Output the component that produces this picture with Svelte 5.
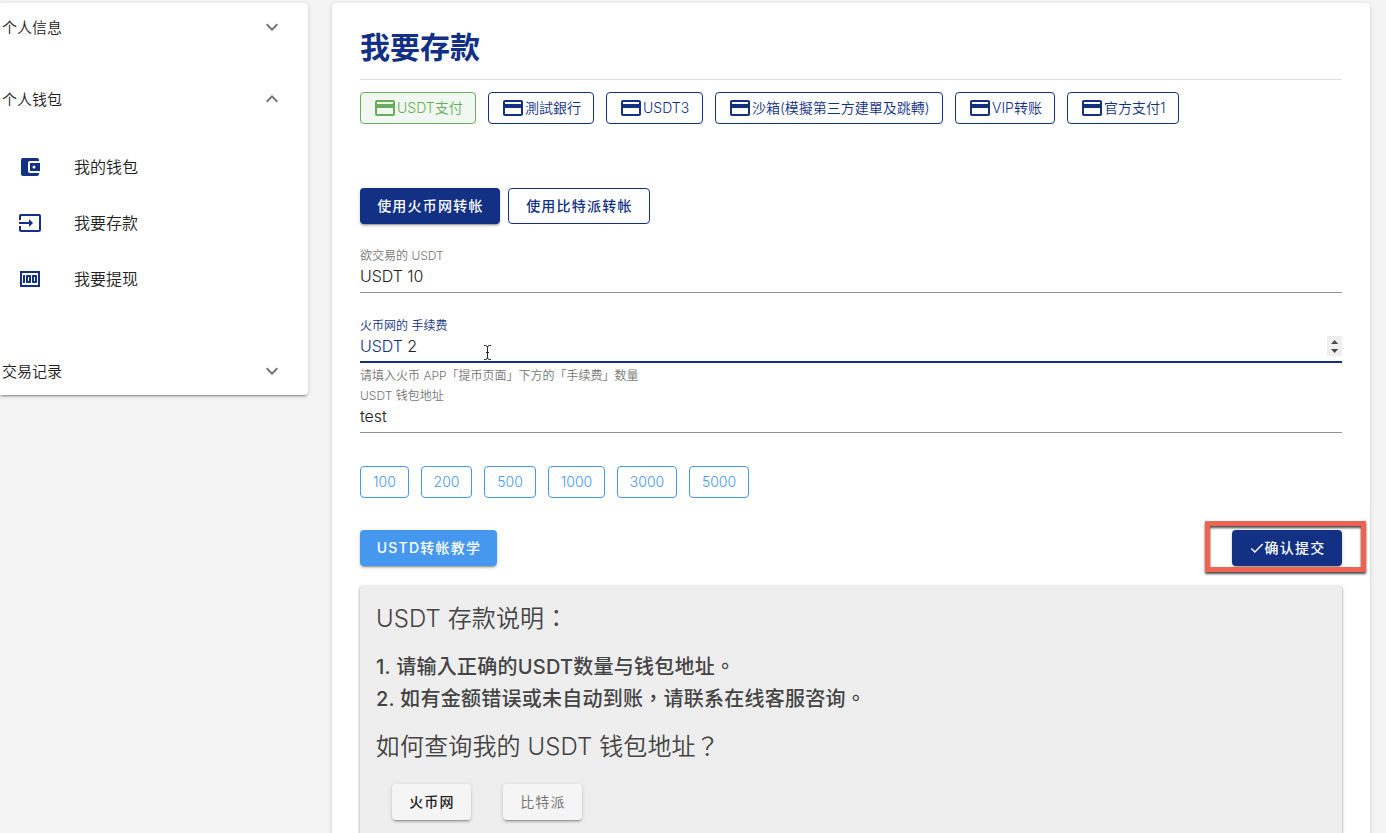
<script>
  const chips = [
    { label: 'USDT支付', width: 116, active: true },
    { label: '測試銀行', width: 106 },
    { label: 'USDT3', width: 97 },
    { label: '沙箱(模擬第三方建單及跳轉)', width: 228 },
    { label: 'VIP转账', width: 100 },
    { label: '官方支付1', width: 112 }
  ];
  const amounts = [
    { value: 100, width: 49 },
    { value: 200, width: 51 },
    { value: 500, width: 52 },
    { value: 1000, width: 57 },
    { value: 3000, width: 60 },
    { value: 5000, width: 60 }
  ];
  const walletItems = [
    {
      label: '我的钱包',
      path: 'M21,18V19A2,2 0 0,1 19,21H5C3.89,21 3,20.1 3,19V5A2,2 0 0,1 5,3H19A2,2 0 0,1 21,5V6H12C10.89,6 10,6.9 10,8V16A2,2 0 0,0 12,18M12,16H22V8H12M16,13.5A1.5,1.5 0 0,1 14.5,12A1.5,1.5 0 0,1 16,10.5A1.5,1.5 0 0,1 17.5,12A1.5,1.5 0 0,1 16,13.5Z'
    },
    {
      label: '我要存款',
      path: 'M21 3.01H3c-1.1 0-2 .9-2 2V9h2V4.99h18v14.03H3V15H1v4.01c0 1.1.9 1.98 2 1.98h18c1.1 0 2-.88 2-1.98v-14c0-1.11-.9-2-2-2zM11 16l4-4-4-4v3H1v2h10v3z'
    },
    {
      label: '我要提现',
      path: 'M5 8h2v8H5zm7 0H9c-.55 0-1 .45-1 1v6c0 .55.45 1 1 1h3c.55 0 1-.45 1-1V9c0-.55-.45-1-1-1zm-1 6h-1v-4h1v4zm7-6h-3c-.55 0-1 .45-1 1v6c0 .55.45 1 1 1h3c.55 0 1-.45 1-1V9c0-.55-.45-1-1-1zm-1 6h-1v-4h1v4zM2 4v16h20V4H2zm2 14V6h16v12H4z'
    }
  ];
</script>

{#snippet chevron(up)}
  <svg class="chevron" class:up viewBox="0 0 24 24"><path d="M16.59 8.59L12 13.17 7.41 8.59 6 10l6 6 6-6z" /></svg>
{/snippet}

<div class="page">
  <aside class="sidebar">
    <div class="group-head"><span>个人信息</span>{@render chevron(false)}</div>
    <div class="group-head spaced"><span>个人钱包</span>{@render chevron(true)}</div>
    <nav class="items">
      {#each walletItems as item}
        <div class="item">
          <svg viewBox="0 0 24 24"><path d={item.path} /></svg>
          <span>{item.label}</span>
        </div>
      {/each}
    </nav>
    <div class="group-head"><span>交易记录</span>{@render chevron(false)}</div>
  </aside>

  <main class="card">
    <h1>我要存款</h1>

    <div class="chips">
      {#each chips as chip}
        <div class="chip" class:active={chip.active} style="width: {chip.width}px">
          <svg viewBox="0 0 24 24"><path d="M20 4H4c-1.11 0-1.99.89-1.99 2L2 18c0 1.11.89 2 2 2h16c1.11 0 2-.89 2-2V6c0-1.11-.89-2-2-2zm0 14H4v-6h16v6zm0-10H4V6h16v2z" /></svg>
          <span>{chip.label}</span>
        </div>
      {/each}
    </div>

    <div class="modes">
      <button class="btn primary huobi">使用火币网转帐</button>
      <button class="btn outline bitpie">使用比特派转帐</button>
    </div>

    <div class="field">
      <div class="label">欲交易的 USDT</div>
      <div class="value">USDT 10</div>
    </div>
    <div class="field focused">
      <div class="label">火币网的 手续费</div>
      <div class="value">
        <span class="prefix">USDT</span> 2
        <span class="spinner">
          <svg viewBox="0 0 15 20"><path d="M4 8h7.2L7.6 4zM4 13h7.2L7.6 17z" /></svg>
        </span>
        <svg class="ibeam" viewBox="0 0 9 17"><path d="M1 1.5h1.5q2 0 2 2v10q0 2-2 2H1M8 1.5H6.500q-2 0-2 2M8 15.500H6.500q-2 0-2-2M3 8.500h3" /></svg>
      </div>
      <div class="hint">请填入火币 APP「提币页面」下方的「手续费」数量</div>
    </div>
    <div class="field last">
      <div class="label">USDT 钱包地址</div>
      <div class="value">test</div>
    </div>

    <div class="amounts">
      {#each amounts as a}
        <div class="amount" style="width: {a.width}px">{a.value}</div>
      {/each}
    </div>

    <div class="actions">
      <button class="btn info">USTD转帐教学</button>
      <div class="submit-wrap">
        <button class="btn primary submit">
          <svg viewBox="0 0 14 14"><path d="M1.300 7.600l3.600 3.500 7.800-8" /></svg>确认提交
        </button>
        <div class="marker"></div>
      </div>
    </div>

    <section class="notes">
      <h2>USDT 存款说明：</h2>
      <p class="first">1. 请输入正确的USDT数量与钱包地址。</p>
      <p>2. 如有金额错误或未自动到账，请联系在线客服咨询。</p>
      <h2 class="second">如何查询我的 USDT 钱包地址？</h2>
      <div class="sources">
        <button class="btn light">火币网</button>
        <button class="btn light muted">比特派</button>
      </div>
    </section>
  </main>
</div>

<style>
  :global(body) { margin: 0; background: #f4f4f4; overflow: hidden; }
  * { box-sizing: border-box; }
  .page {
    display: flex;
    align-items: flex-start;
    gap: 24px;
    width: 1386px;
    height: 833px;
    padding-top: 3px;
    overflow: hidden;
    background: #f4f4f4;
    color: #212121;
    font-family: Inter, "Noto Sans CJK SC", sans-serif;
    white-space: nowrap;
  }
  .sidebar, .card {
    background: #fff;
    box-shadow: 0 3px 1px -2px rgba(0,0,0,.2), 0 2px 2px rgba(0,0,0,.14), 0 1px 5px rgba(0,0,0,.12);
  }
  .sidebar { width: 308px; height: 392px; border-radius: 0 4px 4px 0; flex: none; }
  .group-head {
    display: flex; align-items: center; justify-content: space-between;
    height: 48px; padding: 0 24px 0 2px; font-size: 15px;
  }
  .group-head span, .item span, .chip span { padding-bottom: 2px; }
  .group-head, .item, .chip, .value, .label, .hint, .amount { font-weight: 350; }
  .spaced { margin-top: 24px; }
  .chevron { width: 24px; height: 24px; fill: #757575; }
  .chevron.up { transform: rotate(180deg); }
  .items { padding: 16px 0 40px; }
  .item { display: flex; align-items: center; height: 56px; padding-left: 18px; gap: 32px; font-size: 16px; }
  .item svg { width: 24px; height: 24px; fill: #123185; }

  .card { width: 1038px; height: 900px; padding: 0 28px; border-radius: 4px; flex: none; }
  h1 {
    height: 77px; margin: 0; border-bottom: 1px solid #e0e0e0;
    color: #123185; font-size: 30px; font-weight: 600; line-height: 89px;
  }
  .chips, .amounts { display: flex; gap: 12px; }
  .chips { margin-top: 12px; }
  .chip {
    display: flex; align-items: center; height: 32px; padding-left: 12px;
    border: 1px solid #123185; border-radius: 4px; color: #123185; font-size: 14px;
  }
  .chip svg { width: 24px; height: 24px; fill: currentColor; flex: none; }
  .chip.active { color: #67ad5b; border-color: #67ad5b; background: #f1f8f1; }
  .modes { display: flex; gap: 8px; margin-top: 64px; }
  .btn {
    display: flex; align-items: center; justify-content: center;
    height: 36px; padding: 0 0 2px 1px; border: 0; border-radius: 4px;
    font-family: inherit; font-size: 14px; font-weight: 500; letter-spacing: 1.25px; white-space: nowrap;
    box-shadow: 0 3px 1px -2px rgba(0,0,0,.2), 0 2px 2px rgba(0,0,0,.14), 0 1px 5px rgba(0,0,0,.12);
  }
  .primary { background: #123185; color: #fff; }
  .outline { background: #fff; color: #123185; border: 1px solid #123185; box-shadow: none; }
  .huobi { width: 140px; }
  .bitpie { width: 142px; }

  .field { height: 70px; }
  .modes + .field { margin-top: 23px; }
  .label, .hint { height: 18px; line-height: 18px; font-size: 12px; color: #757575; }
  .value { position: relative; height: 28px; line-height: 23px; border-bottom: 1px solid #919191; font-size: 16px; letter-spacing: -.05px; }
  .focused .label, .prefix { color: #123185; }
  .focused .value { border-bottom: 2px solid #123185; }
  .hint { margin-top: 4px; }
  .spinner { position: absolute; right: 0; top: 1px; width: 15px; height: 20px; background: #efefef; }
  .spinner svg { display: block; width: 15px; height: 20px; fill: #4a4a4a; }
  .ibeam { position: absolute; left: 123px; top: 9px; width: 9px; height: 17px; fill: none; stroke: #222; }

  .amounts { margin-top: 9px; }
  .amount {
    height: 32px; border: 1px solid #4698ee; border-radius: 4px; color: #4698ee;
    font-size: 14px; line-height: 30px; text-align: center;
  }
  .actions { display: flex; justify-content: space-between; margin-top: 32px; }
  .info { width: 137px; background: #4698ee; color: #fff; }
  .submit-wrap { position: relative; }
  .submit { width: 110px; }
  .submit svg { position: relative; top: 1px; width: 14px; height: 14px; margin-right: 1px; fill: none; stroke: #fff; stroke-width: 1.4; }
  .marker {
    position: absolute; left: -27px; top: -9px; width: 161px; height: 51px;
    border: 5px solid #ee6352; filter: drop-shadow(0 2px 1px rgba(0,0,0,.7));
  }

  .notes {
    height: 300px; margin-top: 20px; padding: 17px 16px; border-radius: 4px; background: #eee; color: #444;
    font-family: Inter, "Noto Sans CJK TC", sans-serif;
    box-shadow: 0 3px 1px -2px rgba(0,0,0,.3), 0 1px 3px rgba(0,0,0,.5);
  }
  h2 { margin: 0; font-size: 24px; line-height: 32px; font-weight: 350; letter-spacing: .1px; }
  p { margin: 0; font-size: 20px; line-height: 32px; font-weight: 500; letter-spacing: .25px; }
  .first { margin-top: 16px; }
  .second { margin-top: 16px; }
  .sources { display: flex; gap: 32px; margin-top: 21px; padding-left: 16px; }
  .light { width: 79px; background: #f5f5f5; color: #212121; }
  .muted { color: #757575; font-weight: 400; }
</style>
